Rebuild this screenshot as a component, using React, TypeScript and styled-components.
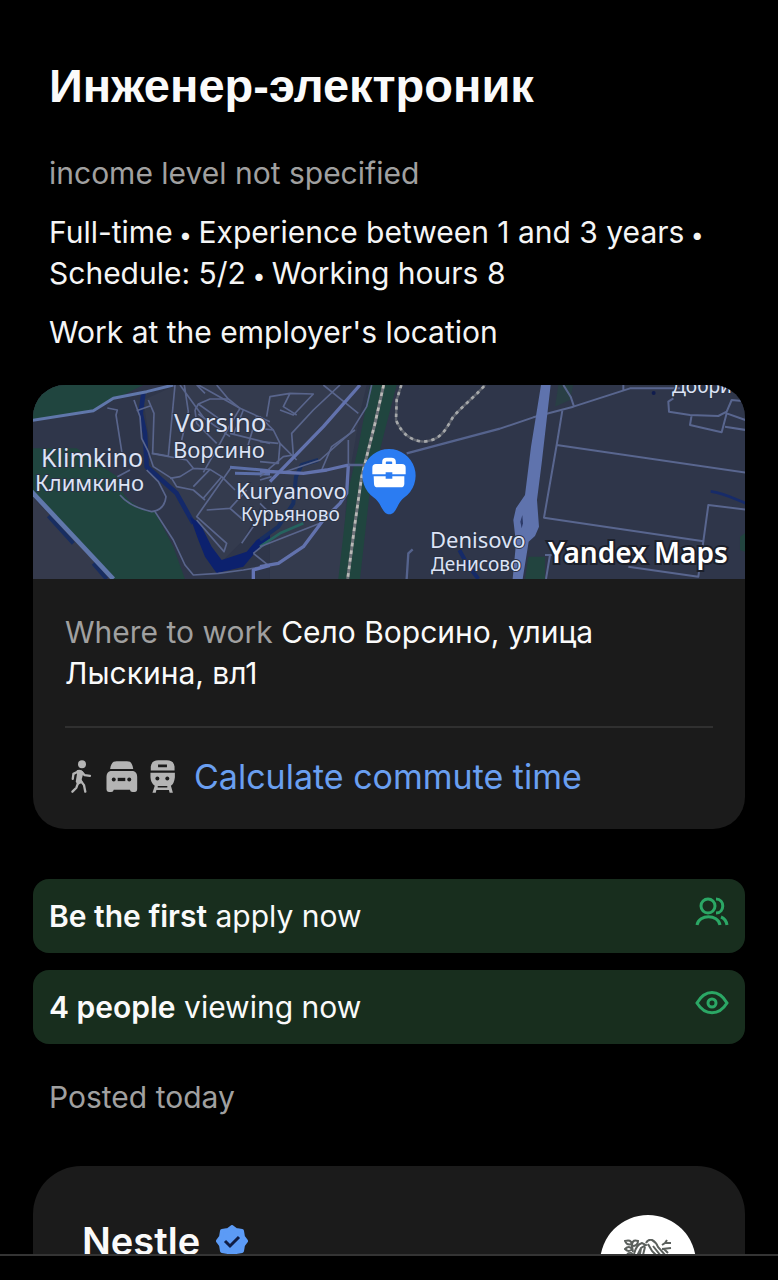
import React from 'react';
import styled, { createGlobalStyle } from 'styled-components';

function App() {
  return (
    <>
      <GlobalStyle />
      <Screen>
        <Scroller>
          <Summary>
            <Title>Инженер-электроник</Title>
            <Text $muted>income level not specified</Text>
            <Text>
              Full-time<Dot> • </Dot>Experience between 1 and 3 years<Dot> •</Dot>
              <br />
              Schedule: 5/2<Dot> • </Dot>Working hours 8
            </Text>
            <Text>Work at the employer's location</Text>
          </Summary>

          <LocationCard>
            <VacancyMap />
            <LocationBody>
              <Address>
                <Muted>Where to work</Muted> Село Ворсино, улица Лыскина, вл1
              </Address>
              <Commute type="button">
                <WalkIcon />
                <CarIcon />
                <TrainIcon />
                <CommuteLabel>Calculate commute time</CommuteLabel>
              </Commute>
            </LocationBody>
          </LocationCard>

          <Notices>
            <Notice>
              <NoticeText>
                <strong>Be the first</strong> apply now
              </NoticeText>
              <PeopleIcon />
            </Notice>
            <Notice>
              <NoticeText>
                <strong>4 people</strong> viewing now
              </NoticeText>
              <EyeIcon />
            </Notice>
          </Notices>

          <Posted>Posted today</Posted>

          <CompanyCard>
            <CompanyName>
              Nestle
              <VerifiedIcon />
            </CompanyName>
            <CompanyLogo>
              <NestIcon />
            </CompanyLogo>
          </CompanyCard>
        </Scroller>
        <BottomBar />
      </Screen>
    </>
  );
}

export default App;

function VacancyMap() {
  return (
    <MapSvg viewBox="0 0 712 194" preserveAspectRatio="xMidYMid slice" role="img" aria-label="Map">
      <rect width="712" height="194" fill="#2f364a" />

      {/* west part: Klimkino and Vorsino */}
      <g transform="translate(-3 -5) scale(0.33333)" fill="none" strokeLinejoin="round">
        <path d="M440 15H720V320L640 480 560 560 480 400 370 260 340 60Z" fill="#343b4e" />
        <path d="M0 15H340L250 60 190 92 0 122Z" fill="#20453f" />
        <path d="M0 205H140L262 290C270 340 300 382 375 395L430 500 465 597H250L0 330Z" fill="#20453f" />
        <path d="M0 345 245 597H0Z" fill="#353a4c" />
        <path d="M55 408 130 490M190 550 230 597" stroke="#182d60" strokeWidth="12" />
        <path d="M340 40 332 100 345 160 350 260 440 340 490 430" stroke="#14296a" strokeWidth="14" />
        <path d="M480 410 510 430 545 500 575 540 650 515 680 480 720 455V480L690 500 640 560 560 580 525 530 505 480Z" fill="#0c216e" />
        <g stroke="#59658c" strokeWidth="5">
          <path d="M232 84 262 90 258 105 278 232" />
          <path d="M312 60 330 110 335 175 355 215 370 260 425 295 440 320 490 330 525 360" />
          <path d="M355 60 372 100 368 220 415 228 435 15M320 92 360 78" />
          <path d="M300 270 262 290M350 270 385 305 408 350C405 380 390 392 365 395 320 385 290 370 270 345" />
          <path d="M375 395 430 480 465 555 490 585 565 580 640 570 720 556" />
          <path d="M365 220 470 240 490 265 540 268 575 290 615 330M490 265 450 290 420 295" />
          <path d="M540 268 490 320M575 290 520 355M605 260 500 410 590 490 582 515 500 420M530 390 600 385 650 330" />
          <path d="M600 385 640 420M680 425 635 490M670 520 720 480M670 520 720 560" />
          <path d="M463 15 475 95 455 180M450 15 520 112M500 15 525 40M500 12 630 85 720 125" />
          <path d="M495 90 505 72 540 57 595 57 630 85 600 135 570 190 520 277M505 72 575 122M505 102 600 170" />
          <path d="M495 90 500 130 560 190M560 15 595 57M600 160 720 190M640 90 610 165M680 108 650 210" />
        </g>
        <path d="M0 122 190 92 250 55 350 35 430 15" stroke="#6077ab" strokeWidth="9" />
        <path d="M0 330 250 597" stroke="#6077ab" strokeWidth="14" />
        <path d="M600 262 720 272M615 280 720 282" stroke="#5c6fa8" strokeWidth="9" />
        <path d="M670 597V570L720 556" stroke="#6474b5" strokeWidth="10" />
      </g>

      {/* centre: Kuryanovo, the railway and its green strip */}
      <g transform="translate(227 -5) scale(0.33333)" fill="none" strokeLinejoin="round">
        <path d="M30 15H320L300 100 260 330 245 597H30Z" fill="#343b4e" />
        <path d="M330 15H410L375 150 330 330 300 597H235L265 330 295 200Z" fill="#20453f" />
        <path d="M175 240 125 255 108 290 100 370 55 440 0 480" stroke="#182f61" strokeWidth="12" />
        <path d="M0 500 60 460 130 430" stroke="#25635f" strokeWidth="8" />
        <g stroke="#59658c" strokeWidth="5">
          <path d="M20 110 30 50 90 40 160 42 100 105 60 90M90 40 70 80 110 105M0 110 40 150" />
          <path d="M190 15 295 100M240 15 160 90 95 160 100 225M335 15 320 80 270 160 180 240 75 275" />
          <path d="M0 145 40 150 60 190 55 250 0 245M60 190 110 240M0 185 55 190M0 290 70 230 100 225" />
          <path d="M285 150 215 200 185 270M265 180V250M0 370 30 400M0 300 35 290M180 430 0 500" />
        </g>
        <path d="M300 15 190 140 30 305" stroke="#6272ad" strokeWidth="10" />
        <path d="M0 273 130 280 200 270 265 255 260 340 240 370 190 420 130 500 55 550 0 560" stroke="#6272ad" strokeWidth="10" />
        <path d="M265 255H310M440 220 720 146" stroke="#55638d" strokeWidth="7" />
        <path d="M440 597 445 520 458 508" stroke="#55638d" strokeWidth="7" />
        <path d="M598 510 620 550 655 597" stroke="#152a68" strokeWidth="12" />
        <path d="M371 15 345 130 320 230 305 290 285 430 263 597" stroke="#6d7178" strokeWidth="9" />
        <path d="M371 15 345 130 320 230 305 290 285 430 263 597" stroke="#b9b9b6" strokeWidth="8" strokeDasharray="11 12" />
        <path d="M424 15 410 60 408 120C425 160 450 182 490 185 550 180 560 140 580 110 610 75 640 55 675 15" stroke="#5c616c" strokeWidth="7" />
        <path d="M424 15 410 60 408 120C425 160 450 182 490 185 550 180 560 140 580 110 610 75 640 55 675 15" stroke="#a6a8aa" strokeWidth="8" strokeDasharray="10 12" />
      </g>

      {/* east part: the motorway and field roads */}
      <g transform="translate(467 -5) scale(0.33333)" fill="none" strokeLinejoin="round">
        <path d="M85 530H135V597H75Z" fill="#22443f" />
        <path d="M720 470 750 450V520L720 510Z" fill="#22443f" />
        <path d="M175 15H220L210 60 165 80Z" fill="#293f45" />
        <g stroke="#59668f" strokeWidth="6">
          <path d="M0 146 100 112 220 80 390 25H540M370 15V30M190 15 212 50 222 80" />
          <path d="M187 92 170 195 132 413 610 484 625 375 750 390M170 195 750 280" />
          <path d="M520 55 505 65 507 95 570 105 655 108 680 95 695 60 750 65M575 105 570 135 665 157 680 100 750 125M675 140 750 152" />
          <path d="M610 484 595 590 385 560M150 525 138 597M135 525H155" />
        </g>
        <path d="M123 15H152L125 250 111 360 117 440 105 468 86 485 68 597H38L48 490 40 420 48 385 75 345 93 200Z" fill="#5f73ad" />
        <path d="M67 405 61 425 65 445 69 430Z" fill="#2c3a68" />
        <path d="M632 334C670 338 700 355 750 375" stroke="#172b69" strokeWidth="8" />
        <circle cx="461" cy="39" r="6" fill="#101c4e" />
      </g>

      <MapLabel x="141" y="47" $size={26}>Vorsino</MapLabel>
      <MapLabel x="140" y="73" $size={22}>Ворсино</MapLabel>
      <MapLabel x="8" y="82" $size={25}>Klimkino</MapLabel>
      <MapLabel x="2" y="106" $size={22}>Климкино</MapLabel>
      <MapLabel x="203" y="114" $size={22}>Kuryanovo</MapLabel>
      <MapLabel x="208" y="136" $size={19}>Курьяново</MapLabel>
      <MapLabel x="397" y="163" $size={22}>Denisovo</MapLabel>
      <MapLabel x="398" y="186" $size={19}>Денисово</MapLabel>
      <MapLabel x="639" y="8" $size={19}>Добри</MapLabel>
      <Attribution x="515" y="178">Yandex Maps</Attribution>

      {/* workplace pin */}
      <g transform="translate(227 -5) scale(0.33333)">
        <path d="M387 207A80 80 0 0 0 342 353C365 368 366 403 388 403 410 403 411 368 432 353A80 80 0 0 0 387 207Z" fill="#2b7cf2" />
        <path d="M372 257V246Q372 239 380 239H394Q402 239 402 246V257" fill="none" stroke="#fff" strokeWidth="11" />
        <path d="M348 252H426Q437 252 437 263V283H397V277H377V283H337V263Q337 252 348 252ZM341 289H377V296H397V289H433V311Q433 322 422 322H353Q342 322 342 311Z" fill="#fff" />
      </g>
    </MapSvg>
  );
}

function WalkIcon() {
  return (
    <Glyph $width={24} viewBox="60 56 72 100" aria-hidden="true">
      <circle cx="96" cy="69" r="12" fill="#b4b4b4" />
      <path
        d="M86 90 70 98 68 113M94 92 104 102 120 104M83 128 79 140 67 152M92 119 102 132 106 152"
        fill="none"
        stroke="#b4b4b4"
        strokeWidth="7"
        strokeLinecap="round"
        strokeLinejoin="round"
      />
      <path d="M80 87Q92 82 101 93L95 114 98 124 83 132 77 122 81 97Z" fill="#b4b4b4" />
    </Glyph>
  );
}

function CarIcon() {
  return (
    <Glyph $width={32} viewBox="167 56 96 100" aria-hidden="true">
      <path
        d="M179 83C182 66 187 60 199 60H230C242 60 246 66 249 83ZM180 89H249Q261 92 261 107V144Q261 153 253 153H247Q240 153 239 146H190Q189 153 182 153H176Q168 153 168 144V107Q168 92 180 89Z"
        fill="#b4b4b4"
      />
      <path d="M202 110H225V120H202Z" fill="#1b1b1b" />
      <circle cx="190" cy="115" r="6" fill="#1b1b1b" />
      <circle cx="237" cy="115" r="6" fill="#1b1b1b" />
    </Glyph>
  );
}

function TrainIcon() {
  return (
    <Glyph $width={26} viewBox="298 56 78 100" aria-hidden="true">
      <path
        d="M300 88V76Q302 57 323 57H348Q370 57 372 76V88ZM299 95H373V108Q371 127 361 134L367 155H357L355 147H317L315 155H305L312 134Q300 126 299 108Z"
        fill="#b4b4b4"
      />
      <path d="M322 70H349V78H322ZM321 135H350V139H321Z" fill="#1b1b1b" />
      <circle cx="320" cy="112" r="6" fill="#1b1b1b" />
      <circle cx="350" cy="112" r="6" fill="#1b1b1b" />
    </Glyph>
  );
}

function PeopleIcon() {
  return (
    <NoticeGlyph viewBox="0 0 34 34" aria-hidden="true">
      <circle cx="13" cy="11" r="7" />
      <path d="M2 30C4 19 23 19 25 30M21 4C30 4 30 18 21 18M26 22Q31 24 32 30" />
    </NoticeGlyph>
  );
}

function EyeIcon() {
  return (
    <NoticeGlyph viewBox="0 0 34 34" aria-hidden="true">
      <path d="M2 17C10 3 24 3 32 17 24 30 10 30 2 17Z" />
      <circle cx="17" cy="17" r="4" />
    </NoticeGlyph>
  );
}

function VerifiedIcon() {
  return (
    <Badge viewBox="0 0 32 32" aria-label="Verified">
      <path
        d="M16 2 20 5 26 6 27 12 30 16 27 20 26 26 20 27 16 30 12 27 6 26 5 20 2 16 5 12 6 6 12 5Z"
        fill="#5c9bf6"
        stroke="#5c9bf6"
        strokeWidth="4"
        strokeLinejoin="round"
      />
      <path d="M9 16 14 21 23 12" fill="none" stroke="#101d45" strokeWidth="3" />
    </Badge>
  );
}

function NestIcon() {
  return (
    <svg width="48" height="40" viewBox="0 0 48 40" fill="none" stroke="#5b605d" aria-hidden="true">
      {/* leaves */}
      <path d="M1 2Q7 0 8 5 3 7 1 2ZM8 5Q9 0 14 2 14 7 8 7ZM1 10Q5 6 8 10 5 14 1 10ZM8 7 9 13M3 15Q8 12 9 17" strokeWidth="2" />
      {/* chicks and nest */}
      <path d="M10 15Q12 6 18 4L22 6 17 9 13 17M17 9 16 15M21 8 19 16M5 22Q24 36 43 22" strokeWidth="2" />
      {/* parent bird */}
      <path d="M22 4Q24 0 28 1 32 3 34 8L42 17M24 5 28 12 33 17M29 7 37 17" strokeWidth="2" />
      {/* twigs */}
      <path d="M38 6 41 4 43 1M41 4 47 4M38 10 47 9M40 10 44 14" strokeWidth="2" />
    </svg>
  );
}

const GlobalStyle = createGlobalStyle`
  * {
    box-sizing: border-box;
  }

  body {
    margin: 0;
    background-color: #000;
    color: #fafafa;
    font-family: Inter, 'Liberation Sans', sans-serif;
  }
`;

const Screen = styled.div`
  display: flex;
  flex-direction: column;
  height: 100vh;
`;

const Scroller = styled.main`
  flex: 1;
  min-height: 0;
  overflow: hidden;
  padding: 56px 33px 0;
`;

const BottomBar = styled.footer`
  height: 26px;
  border-top: 2px solid #343434;
  background-color: #000;
`;

const Summary = styled.header`
  display: flex;
  flex-direction: column;
  gap: 18px;
  padding: 0 16px;
`;

const Title = styled.h1`
  margin: 0 0 19px;
  font-family: 'Liberation Sans', sans-serif;
  font-size: 47px;
  line-height: 60px;
  font-weight: 700;
`;

const Text = styled.p<{ $muted?: boolean }>`
  margin: 0;
  font-size: 30px;
  line-height: 41px;
  color: ${({ $muted }) => ($muted ? '#a0a0a0' : '#f5f5f5')};
`;

const Dot = styled.span`
  font-size: 23px;
  line-height: 1;
`;

const LocationCard = styled.section`
  margin-top: 32px;
  border-radius: 32px;
  background-color: #1b1b1b;
  overflow: hidden;
`;

const MapSvg = styled.svg`
  display: block;
  width: 100%;
  height: 194px;
`;

const MapLabel = styled.text<{ $size: number }>`
  font-family: 'Noto Sans', sans-serif;
  font-size: ${({ $size }) => $size}px;
  fill: #dce3f5;
  stroke: #2b3245;
  stroke-width: 2px;
  paint-order: stroke;
`;

const Attribution = styled.text`
  font-family: 'Noto Sans', sans-serif;
  font-size: 28px;
  font-weight: 600;
  fill: #fff;
  stroke: #1c202b;
  stroke-width: 4px;
  paint-order: stroke;
`;

const LocationBody = styled.div`
  padding: 33px 32px 0;
`;

const Address = styled.p`
  margin: 0;
  padding-bottom: 32px;
  border-bottom: 2px solid #303030;
  font-size: 30px;
  line-height: 41px;
`;

const Muted = styled.span`
  color: #a0a0a0;
`;

const Commute = styled.button`
  display: flex;
  align-items: center;
  gap: 12px;
  width: 100%;
  height: 101px;
  padding: 0 5px 5px;
  border: 0;
  background: none;
  color: #6a9ff0;
  font: inherit;
  font-size: 34px;
  text-align: left;
`;

const CommuteLabel = styled.span`
  margin-left: 6px;
`;

const Glyph = styled.svg<{ $width: number }>`
  flex: none;
  width: ${({ $width }) => $width}px;
  height: 33px;
`;

const Notices = styled.div`
  display: flex;
  flex-direction: column;
  gap: 17px;
  margin-top: 50px;
`;

const Notice = styled.div`
  display: flex;
  justify-content: space-between;
  height: 74px;
  padding: 16px;
  border-radius: 16px;
  background-color: #182e1e;
`;

const NoticeText = styled.p`
  margin: 0;
  font-size: 30px;
  line-height: 42px;

  strong {
    font-weight: 600;
  }
`;

const NoticeGlyph = styled.svg`
  flex: none;
  width: 34px;
  height: 34px;
  fill: none;
  stroke: #2ba765;
  stroke-width: 3px;
`;

const Posted = styled.p`
  margin: 32px 16px 0;
  font-size: 30px;
  line-height: 42px;
  color: #a0a0a0;
`;

const CompanyCard = styled.section`
  display: flex;
  justify-content: space-between;
  height: 240px;
  margin-top: 48px;
  padding: 49px 49px 0;
  border-radius: 48px;
  background-color: #1b1b1b;
`;

const CompanyName = styled.h2`
  display: flex;
  align-items: center;
  gap: 16px;
  height: 52px;
  margin: 0;
  font-size: 38px;
  font-weight: 600;
`;

const Badge = styled.svg`
  width: 32px;
  height: 32px;
`;

const CompanyLogo = styled.div`
  display: flex;
  justify-content: center;
  width: 96px;
  height: 96px;
  padding-top: 24px;
  border-radius: 50%;
  background-color: #fff;
`;
